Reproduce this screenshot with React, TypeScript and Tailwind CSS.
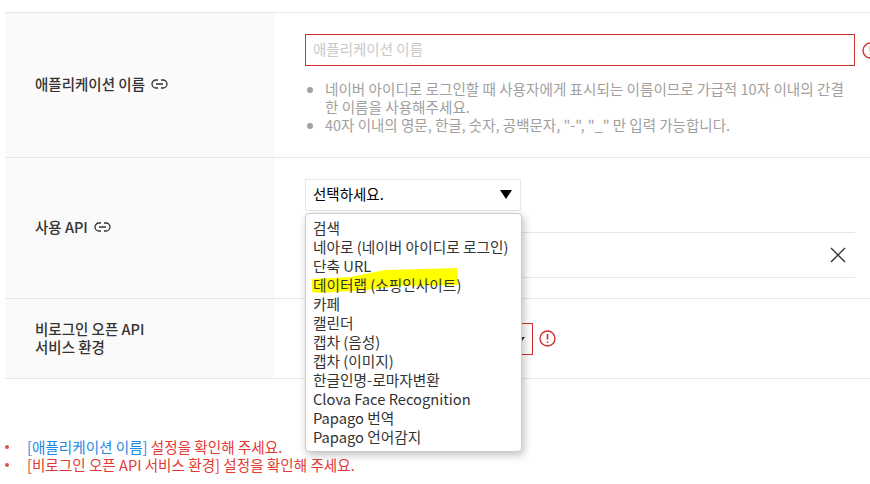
const FONT = "font-['Noto_Sans_CJK_KR','Noto_Sans',sans-serif]";

const apiOptions = [
  '검색',
  '네아로 (네이버 아이디로 로그인)',
  '단축 URL',
  '데이터랩 (쇼핑인사이트)',
  '카페',
  '캘린더',
  '캡차 (음성)',
  '캡차 (이미지)',
  '한글인명-로마자변환',
  'Clova Face Recognition',
  'Papago 번역',
  'Papago 언어감지',
];

function LinkIcon() {
  return (
    <svg width="17" height="10" viewBox="0 0 17 10" fill="none" stroke="#333" strokeWidth="1.3" className="ml-[6px] inline-block">
      <path d="M7 1H5a4 4 0 0 0 0 8h2M10 1h2a4 4 0 0 1 0 8h-2M5 5h7" />
    </svg>
  );
}

function AlertIcon() {
  return (
    <svg width="17" height="17" viewBox="0 0 17 17" fill="none" className="shrink-0">
      <circle cx="8.5" cy="8.5" r="7.5" stroke="#d32f2f" strokeWidth="1.4" />
      <path d="M8.5 4v5.5M8.5 11.5v1.6" stroke="#d32f2f" strokeWidth="1.6" />
    </svg>
  );
}

function Arrow() {
  return <span className="h-0 w-0 border-x-[6px] border-t-[9px] border-x-transparent border-t-black" />;
}

function Bullet({ children }: { children: React.ReactNode }) {
  return (
    <div className="flex items-center whitespace-nowrap">
      <span className="mr-[18px] h-[4px] w-[4px] rounded-full bg-[#d9534f]" />
      <span>{children}</span>
    </div>
  );
}

export default function App() {
  return (
    <div className={`${FONT} h-[484px] w-[870px] overflow-hidden bg-white pl-[5px] pt-3 text-[14.5px]`}>
      <div className="w-[1000px] border-t border-[#e6e6e6]">
        {/* 애플리케이션 이름 */}
        <div className="flex h-[145px] border-b border-[#e6e6e6]">
          <div className="flex w-[270px] shrink-0 items-center bg-[#fafafa] pb-[3px] pl-[30px] font-medium text-[#333]">
            애플리케이션 이름
            <LinkIcon />
          </div>
          <div className="pl-[30px] pt-[21px]">
            <div className="flex items-center">
              <div className="flex h-[32px] w-[550px] items-center border border-[#d32f2f] pb-[3px] pl-[7px] text-[#c8c8c8]">
                애플리케이션 이름
              </div>
              <span className="ml-[7px]">
                <AlertIcon />
              </span>
            </div>
            <ul className="mt-[14px] w-[550px] list-disc pl-[20px] text-[14.6px] leading-[18px] text-[#a0a0a0]">
              <li>
                네이버 아이디로 로그인할 때 사용자에게 표시되는 이름이므로 가급적 10자 이내의 간결
                <br />한 이름을 사용해주세요.
              </li>
              <li className="text-[14.5px]">40자 이내의 영문, 한글, 숫자, 공백문자, "-", "_" 만 입력 가능합니다.</li>
            </ul>
          </div>
        </div>

        {/* 사용 API */}
        <div className="flex h-[141px] border-b border-[#e6e6e6]">
          <div className="flex w-[270px] shrink-0 items-center bg-[#fafafa] pb-[3px] pl-[30px] font-medium text-[#333]">
            사용 API
            <LinkIcon />
          </div>
          <div className="relative w-[580px] pl-[30px] pt-[21px]">
            <div className="flex h-[32px] w-[216px] items-center justify-between border border-[#e6e6e6] pb-[2px] pl-[7px] pr-[8px] text-black">
              선택하세요.
              <Arrow />
            </div>
            <div className="mt-[21px] flex h-[46px] w-[550px] items-center justify-end border-y border-[#e6e6e6] pr-[9px]">
              <svg width="16" height="16" viewBox="0 0 16 16" stroke="#333" strokeWidth="1.4">
                <path d="M1 1l14 14M15 1L1 15" />
              </svg>
            </div>
          </div>
        </div>

        {/* 비로그인 오픈 API */}
        <div className="flex h-[80px] border-b border-[#e6e6e6]">
          <div className="flex w-[270px] shrink-0 items-center bg-[#fafafa] pb-[1px] pl-[30px] font-medium leading-[18px] text-[#333]">
            <span>
              비로그인 오픈 API
              <br />
              서비스 환경
            </span>
          </div>
          <div className="flex items-center pl-[30px]">
            <div className="flex h-[32px] w-[228px] items-center justify-end border border-[#d32f2f] pr-[7px]">
              <span className="h-0 w-0 border-x-[3px] border-t-[4px] border-x-transparent border-t-[#333]" />
            </div>
            <span className="ml-[6px]">
              <AlertIcon />
            </span>
          </div>
        </div>
      </div>

      <div className="mt-[59px] text-[14.6px] leading-[18px] text-[#e53935]">
        <Bullet>
          <span className="text-[#1e88e5]">[애플리케이션 이름]</span> 설정을 확인해 주세요.
        </Bullet>
        <Bullet>[비로그인 오픈 API 서비스 환경] 설정을 확인해 주세요.</Bullet>
      </div>

      {/* 열린 드롭다운 */}
      <div className="absolute left-[305px] top-[213px] h-[239px] w-[217px] rounded-[4px] border border-[#ccc] bg-white py-[4px] pl-[7px] text-[14.7px] leading-[19px] text-[#333] shadow-[2px_3px_8px_rgba(0,0,0,0.25)]">
        {apiOptions.map((option) => (
          <div key={option} className="relative whitespace-nowrap">
            {option === '데이터랩 (쇼핑인사이트)' && (
              <svg width="150" height="28" viewBox="0 0 150 28" className="absolute -left-[2px] -top-[8px]">
                <polygon points="1,12 39,10 74,3 146,1 147,18 89,19 56,23 9,26 1,25" fill="#ffff00" />
              </svg>
            )}
            <span className="relative">{option}</span>
          </div>
        ))}
      </div>
    </div>
  );
}
